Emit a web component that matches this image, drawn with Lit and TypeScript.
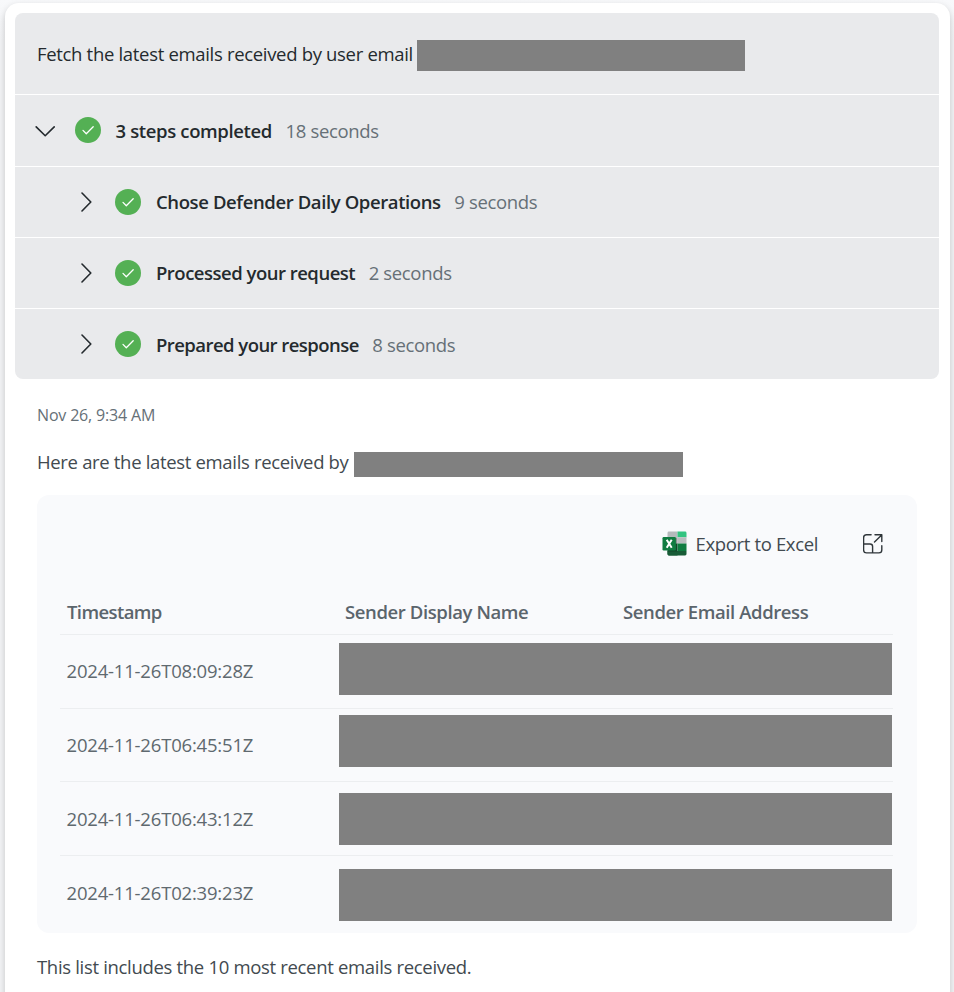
import { LitElement, html, css, svg } from "lit";
import { customElement } from "lit/decorators.js";

interface Step {
  name: string;
  time: string;
  tracking: number;
}

const STEPS: Step[] = [
  { name: "Chose Defender Daily Operations", time: "9 seconds", tracking: -0.39 },
  { name: "Processed your request", time: "2 seconds", tracking: -0.5 },
  { name: "Prepared your response", time: "8 seconds", tracking: -0.55 },
];

// offset: distance from the row's top edge to its redaction bar
const ROWS = [
  { timestamp: "2024-11-26T08:09:28Z", offset: 8 },
  { timestamp: "2024-11-26T06:45:51Z", offset: 6 },
  { timestamp: "2024-11-26T06:43:12Z", offset: 11 },
  { timestamp: "2024-11-26T02:39:23Z", offset: 13 },
];

const tick = html`<svg class="tick" viewBox="0 0 26 26">
  <circle cx="13" cy="13" r="13" fill="#54b054" />
  <path d="M8 13.4l3.3 3.3 6.9-6.9" fill="none" stroke="#fff" stroke-width="1.3" stroke-linecap="round" stroke-linejoin="round" />
</svg>`;

const chevron = (d: string) => html`<svg class="chevron" viewBox="0 0 20 20">
  ${svg`<path d=${d} fill="none" stroke="#242a2e" stroke-width="1.6" stroke-linecap="round" stroke-linejoin="round" />`}
</svg>`;

const excel = html`<svg class="excel" viewBox="0 0 25 25">
  <defs><clipPath id="sheet"><rect x="5.5" y="0.5" width="19" height="24" rx="1.4" /></clipPath></defs>
  <g clip-path="url(#sheet)">
    <rect x="5" y="0" width="10.5" height="12.5" fill="#b5babc" />
    <rect x="15.5" y="0" width="9.5" height="6.3" fill="#33c481" />
    <rect x="15.5" y="6.3" width="9.5" height="6.2" fill="#b9bdbf" />
    <rect x="5" y="12.5" width="10.5" height="12.5" fill="#185c37" />
    <rect x="15.5" y="12.5" width="9.5" height="7.5" fill="#107c41" />
    <rect x="5" y="20" width="20" height="5" fill="#185c37" />
    <rect x="5" y="7" width="10.2" height="13.5" fill="#000" opacity=".22" />
  </g>
  <rect x="0.5" y="6" width="13.4" height="13.4" rx="1.2" fill="#107c41" />
  <path d="M4.7 8.8l5 8M9.7 8.8l-5 8" stroke="#fff" stroke-width="2" />
</svg>`;

const expand = html`<svg class="expand" viewBox="0 0 20 20">
  <path
    d="M8.1 .8H3.5A2.9 2.9 0 0 0 .6 3.7v12.3A2.9 2.9 0 0 0 3.5 18.9h12.4a2.9 2.9 0 0 0 2.9-2.9v-4.3M.6 10h6.4a2.6 2.6 0 0 1 2.6 2.6v6.3M12 .8h6.8v6.8M18.7 .9l-7.2 7.2"
    fill="none" stroke="#30363a" stroke-width="1.4" stroke-linecap="round" stroke-linejoin="round" />
</svg>`;

@customElement("app-root")
export class AppRoot extends LitElement {
  static styles = css`
    :host {
      display: block;
      height: 992px;
      overflow: hidden;
      box-sizing: border-box;
      padding: 3px 4px 0 5px;
      background: linear-gradient(#f8f9fb, #f3f4f6 40px);
      font: 18.5px/26px "Open Sans", "Noto Sans", sans-serif;
      letter-spacing: -0.33px;
      white-space: nowrap;
      color: #424a50;
    }
    * { box-sizing: border-box; }
    svg { display: block; flex: none; }
    .card {
      height: 1010px;
      padding: 10px 11px 0 10px;
      border-radius: 14px;
      background: #fff;
      box-shadow: 0 3px 7px rgba(0, 0, 0, 0.2);
    }
    .steps {
      border-radius: 8px;
      overflow: hidden;
      background: #e9eaec;
      color: #242a2e;
    }
    .step {
      display: flex;
      align-items: center;
      height: 71px;
      padding-left: 61px;
      border-top: 1px solid #fff;
    }
    .step.parent { height: 72px; padding-left: 20px; }
    .prompt {
      display: flex;
      align-items: center;
      height: 81px;
      padding: 0 0 0 22px;
      letter-spacing: -0.32px;
    }
    .chevron { width: 20px; height: 20px; margin-right: 19px; }
    .parent .chevron { margin-right: 20px; }
    .tick { width: 26px; height: 26px; margin-top: -1px; }
    .name { margin-left: 15px; font-weight: 600; }
    .time { margin-left: 13.5px; color: #667077; letter-spacing: -0.34px; }
    .parent .name { margin-left: 14.5px; letter-spacing: -0.36px; }
    .parent .name, .parent .time, .step:last-child .name, .step:last-child .time { padding-top: 1px; }
    .redacted { background: #808080; }
    .prompt .redacted { width: 328px; height: 31px; margin: 3px 0 0 4px; }
    .answer { padding: 0 22px; }
    .date {
      padding-top: 25px;
      font-size: 16px;
      line-height: 22px;
      letter-spacing: -0.17px;
      color: #667077;
    }
    .intro { display: flex; align-items: center; margin-top: 23px; height: 26px; }
    .intro .redacted { width: 329px; height: 25px; margin: 5px 0 0 5px; }
    .panel {
      height: 438px;
      margin-top: 20px;
      padding: 36px 24px 0 23px;
      border-radius: 12px;
      background: #f9fafc;
    }
    .tools { display: flex; align-items: center; height: 26px; justify-content: flex-end; padding-right: 10px; }
    .excel { width: 25px; height: 25px; margin-top: -1px; }
    .export { margin: 0 45px 0 9px; letter-spacing: -0.36px; }
    .expand { width: 20px; height: 20px; margin-top: -1px; }
    .columns, .record { display: grid; grid-template-columns: 278px 278px 1fr; padding-left: 7px; }
    .columns { height: 77px; padding-top: 42px; font-weight: 600; letter-spacing: -0.4px; color: #5b656c; }
    .columns .first { letter-spacing: -0.6px; }
    .record {
      grid-template-columns: 272.5px 1fr;
      height: 74px;
      padding-left: 6.5px;
      padding-right: 1px;
      border-top: 1px solid #eceef0;
    }
    .record.short { height: 73px; }
    .stamp { padding-top: 23px; letter-spacing: -0.19px; color: #5f696f; }
    .record.short ~ .record .stamp { padding-top: 24px; }
    .record .redacted { height: 52px; }
    .note { margin-top: 21px; letter-spacing: -0.32px; }
  `;

  render() {
    return html`
      <main class="card">
        <section class="steps">
          <div class="prompt">
            <span>Fetch the latest emails received by user email</span>
            <div class="redacted"></div>
          </div>
          <div class="step parent">
            ${chevron("M1.2 5.9l9 8.8 9-8.8")} ${tick}
            <span class="name">3 steps completed</span>
            <span class="time">18 seconds</span>
          </div>
          ${STEPS.map(
            (s) => html`<div class="step">
              ${chevron("M6 1l8.8 9L6 19")} ${tick}
              <span class="name" style="letter-spacing:${s.tracking}px">${s.name}</span>
              <span class="time">${s.time}</span>
            </div>`
          )}
        </section>
        <section class="answer">
          <div class="date">Nov 26, 9:34 AM</div>
          <div class="intro">
            <span>Here are the latest emails received by</span>
            <div class="redacted"></div>
          </div>
          <div class="panel">
            <div class="tools">
              ${excel}
              <span class="export">Export to Excel</span>
              ${expand}
            </div>
            <div class="columns">
              <span class="first">Timestamp</span>
              <span>Sender Display Name</span>
              <span>Sender Email Address</span>
            </div>
            ${ROWS.map(
              (r, i) => html`<div class="record ${i === 1 ? "short" : ""}">
                <span class="stamp">${r.timestamp}</span>
                <div class="redacted" style="margin-top:${r.offset}px"></div>
              </div>`
            )}
          </div>
          <div class="note">This list includes the 10 most recent emails received.</div>
        </section>
      </main>
    `;
  }
}
